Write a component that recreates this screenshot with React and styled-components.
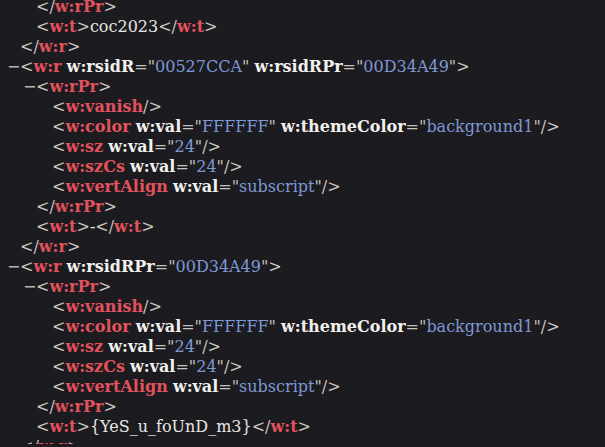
import React from 'react'
import styled, { createGlobalStyle } from 'styled-components'

const GlobalStyle = createGlobalStyle`
    html, body {
        margin: 0;
        background: #1c1b20;
    }
    body {
        font-family: "DejaVu Serif", serif;
        font-size: 16px;
        color: #e8e6e3;
    }
`

const Viewer = styled.div`
    width: 605px;
    height: 447px;
    overflow: hidden;
    background: #1c1b20;
    padding: 0;
    margin-top: -3px;
`

const Block = styled.div`
    margin-left: ${props => props.level * 16 + 20}px;
`

const Line = styled.div`
    position: relative;
    height: 20px;
    line-height: 20px;
    white-space: nowrap;
`

const Toggle = styled.span`
    display: inline-block;
    width: 13px;
    margin-left: -13px;
    color: #b8b4ad;
    font-family: "DejaVu Sans", sans-serif;
`

const Mark = styled.span`
    color: #c9c5be;
`

const Tag = styled.span`
    color: #e0525c;
    font-weight: bold;
`

const Attr = styled.span`
    color: #f2f0ec;
    font-weight: bold;
`

const Value = styled.span`
    color: #7e98d6;
`

const Text = styled.span`
    color: #e8e6e3;
`

function Attrs({ list }) {
    return list.map(([name, val]) => (
        <React.Fragment key={name}>
            {' '}<Attr>{name}</Attr><Mark>="</Mark><Value>{val}</Value><Mark>"</Mark>
        </React.Fragment>
    ))
}

function Empty({ level, name, attrs = [] }) {
    return (
        <Block level={level}>
            <Line>
                <Mark>&lt;</Mark><Tag>{name}</Tag><Attrs list={attrs} /><Mark>/&gt;</Mark>
            </Line>
        </Block>
    )
}

function Open({ level, name, attrs = [] }) {
    return (
        <Block level={level}>
            <Line>
                <Toggle>−</Toggle><Mark>&lt;</Mark><Tag>{name}</Tag><Attrs list={attrs} /><Mark>&gt;</Mark>
            </Line>
        </Block>
    )
}

function Close({ level, name }) {
    return (
        <Block level={level}>
            <Line>
                <Mark>&lt;/</Mark><Tag>{name}</Tag><Mark>&gt;</Mark>
            </Line>
        </Block>
    )
}

function TextEl({ level, name, text }) {
    return (
        <Block level={level}>
            <Line>
                <Mark>&lt;</Mark><Tag>{name}</Tag><Mark>&gt;</Mark><Text>{text}</Text><Mark>&lt;/</Mark><Tag>{name}</Tag><Mark>&gt;</Mark>
            </Line>
        </Block>
    )
}

function RunProps() {
    return (
        <>
            <Open level={1} name="w:rPr" />
            <Empty level={2} name="w:vanish" />
            <Empty level={2} name="w:color" attrs={[['w:val', 'FFFFFF'], ['w:themeColor', 'background1']]} />
            <Empty level={2} name="w:sz" attrs={[['w:val', '24']]} />
            <Empty level={2} name="w:szCs" attrs={[['w:val', '24']]} />
            <Empty level={2} name="w:vertAlign" attrs={[['w:val', 'subscript']]} />
            <Close level={1} name="w:rPr" />
        </>
    )
}

export default function App() {
    return (
        <>
            <GlobalStyle />
            <Viewer>
                <Close level={1} name="w:rPr" />
                <TextEl level={1} name="w:t" text="coc2023" />
                <Close level={0} name="w:r" />

                <Open level={0} name="w:r" attrs={[['w:rsidR', '00527CCA'], ['w:rsidRPr', '00D34A49']]} />
                <RunProps />
                <TextEl level={1} name="w:t" text="-" />
                <Close level={0} name="w:r" />

                <Open level={0} name="w:r" attrs={[['w:rsidRPr', '00D34A49']]} />
                <RunProps />
                <TextEl level={1} name="w:t" text="{YeS_u_foUnD_m3}" />
                <Close level={0} name="w:r" />
            </Viewer>
        </>
    )
}
